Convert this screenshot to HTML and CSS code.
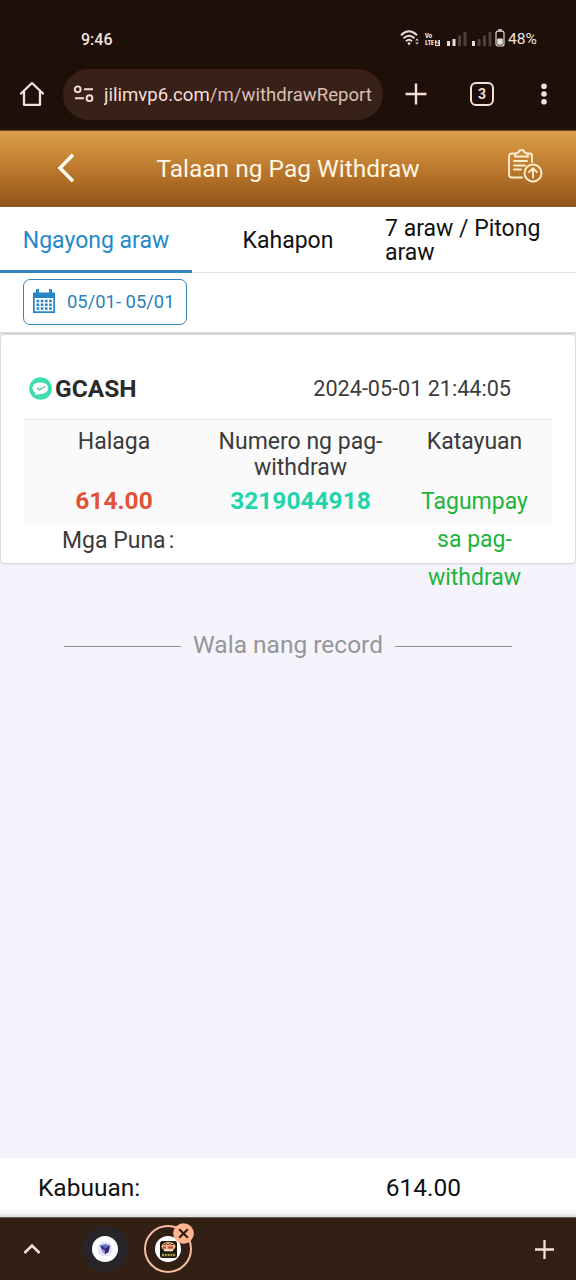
FILE: index.html
```html
<!DOCTYPE html>
<html lang="fil">
<head>
<meta charset="utf-8">
<title>Talaan ng Pag Withdraw</title>
<link rel="stylesheet" href="styles.css">
</head>
<body>
<div class="screen">
  <div class="status-bar">
    <span class="clock">9:46</span>
    <div class="status-icons">
      <svg width="20" height="18" viewBox="0 0 20 18" fill="none" stroke="#e6dcd8" stroke-width="1.9"><path d="M1 6.2Q9 -1.5 17 6.2M3.5 9.3Q9 4 14.5 9.3M6 12.2Q9 9.4 12 12.2"/><circle cx="9" cy="14.6" r="1.3" fill="#e6dcd8" stroke="none"/><path d="M15.2 11.5l1.8-2 1.8 2zM15.2 13.5l1.8 2 1.8-2z" fill="#e6dcd8" stroke="none"/></svg>
      <span class="volte"><span>Vo</span><span class="lte">LTE<b>2</b></span></span>
      <svg class="signal" width="20" height="14" viewBox="0 0 20 14"><path fill="#e6dcd8" d="M0 9h3v5H0zM5.5 7h3v7h-3z"/><path fill="#4d403a" d="M11 3.500h3V14h-3zM16.500 0h3v14h-3z"/></svg>
      <svg class="signal second" width="20" height="14" viewBox="0 0 20 14"><path fill="#e6dcd8" d="M0 9h3v5H0z"/><path fill="#4d403a" d="M5.500 7h3v7h-3zM11 3.500h3V14h-3zM16.500 0h3v14h-3z"/></svg>
      <svg class="battery" width="10" height="18" viewBox="0 0 10 18"><path d="M3 1h4" stroke="#e6dcd8" stroke-width="1.500"/><rect x="1" y="2.200" width="8" height="14.800" rx="2" fill="none" stroke="#e6dcd8" stroke-width="1.200"/><rect x="2.200" y="9.500" width="5.600" height="6.300" rx="1" fill="#e6dcd8"/></svg>
      <span class="percent">48%</span>
    </div>
  </div>

  <div class="toolbar">
    <svg class="home" width="26" height="26" viewBox="0 0 26 26" fill="none" stroke="#f6dfd7" stroke-width="2.300" stroke-linejoin="round" stroke-linecap="round"><path d="M2 12.500L13 2l11 10.500M5 10v13.800h16V10"/></svg>
    <div class="address">
      <svg width="22" height="18" viewBox="0 0 22 18" fill="none" stroke="#f6dfd7" stroke-width="1.900"><circle cx="4.700" cy="4.300" r="2.900"/><path d="M11 4.300h9M2 13.200h9"/><circle cx="16.500" cy="13.200" r="2.900"/></svg>
      <span class="url"><span class="host">jilimvp6.com</span>/m/withdrawReport</span>
    </div>
    <svg class="plus" width="22" height="22" viewBox="0 0 22 22" stroke="#f6dfd7" stroke-width="2.400"><path d="M11 .5v21M.5 11h21"/></svg>
    <span class="tab-count">3</span>
    <svg class="dots" width="8" height="22" viewBox="0 0 8 22" fill="#f6dfd7"><circle cx="4" cy="3.200" r="2.800"/><circle cx="4" cy="11" r="2.800"/><circle cx="4" cy="18.800" r="2.800"/></svg>
  </div>

  <header class="header">
    <svg class="back" width="18" height="30" viewBox="0 0 18 30" fill="none" stroke="#fffaf0" stroke-width="3.500"><path d="M16 1.800L3 15l13 13.200"/></svg>
    <h1 class="title">Talaan ng Pag Withdraw</h1>
    <svg class="report" width="36" height="36" viewBox="0 0 36 36" fill="none" stroke="#ffedcb" stroke-width="1.900" stroke-linecap="round" stroke-linejoin="round"><path d="M8 4.500H5Q2 4.500 2 7.500v18Q2 28.500 5 28.500h10M21 4.500h2Q25 4.500 25 7v6"/><path d="M8 7.500Q7.500 4 11.500 3.500 12 1 14.500 1T17.500 3.500Q21.500 4 21 7.500z"/><path d="M7 12h13M7 16.500h11M7 20.500h7"/><circle cx="26" cy="24" r="8.500"/><path d="M26 28.500v-9M22 23.200l4-4 4 4"/></svg>
  </header>

  <nav class="tabs">
    <span class="tab active">Ngayong araw</span>
    <span class="tab">Kahapon</span>
    <span class="tab">7 araw / Pitong araw</span>
  </nav>

  <div class="filter">
    <div class="date-range">
      <svg width="22" height="24" viewBox="0 0 22 24"><path fill="#2585c7" d="M0 3.500h3v-3h3v3h10v-3h3v3h3V24H0z"/><path fill="#fff" d="M1.700 9h18.600v13.300H1.700z"/><path d="M3.500 12h16M3.500 15.800h16M3.500 19.600h16" stroke="#2585c7" stroke-width="2.500" stroke-dasharray="2.700 1.500"/><path d="M4.500 0v5M17.500 0v5" stroke="#2585c7" stroke-width="2.600" stroke-linecap="round"/></svg>
      <span>05/01- 05/01</span>
    </div>
  </div>

  <main class="content">
    <section class="card">
      <div class="card-head">
        <svg width="23" height="23" viewBox="0 0 23 23"><circle cx="11.500" cy="11.500" r="11.300" fill="#3fdcb0"/><path d="M3.500 10.500Q4 5.500 11 5.500q8.500 0 8 6-.5 5-7.500 5.500-4 .5-5.500 1l.5-2Q3.500 14.500 3.500 10.500z" fill="#fff"/><path d="M8 11l2.500 2 6-3.800" fill="none" stroke="#4bbf9e" stroke-width="1.300"/></svg>
        <strong class="method">GCASH</strong>
        <time class="time">2024-05-01 21:44:05</time>
      </div>
      <div class="details">
        <div class="cell"><span class="label">Halaga</span><b class="value amount">614.00</b></div>
        <div class="cell"><span class="label">Numero ng pag-withdraw</span><b class="value number">3219044918</b></div>
        <div class="cell"><span class="label">Katayuan</span><span class="value state">Tagumpay sa pag-withdraw</span></div>
      </div>
      <div class="remarks">Mga Puna<span class="colon">:</span></div>
    </section>
    <div class="end"><span>Wala nang record</span></div>
  </main>

  <footer class="total"><span class="total-label">Kabuuan:</span><span>614.00</span></footer>

  <div class="tab-strip">
    <svg class="up" width="18" height="12" viewBox="0 0 18 12" fill="none" stroke="#f6dfd7" stroke-width="2.600"><path d="M1.500 10L9 2.500l7.500 7.500"/></svg>
    <div class="site"><svg width="26" height="26" viewBox="0 0 26 26"><circle cx="13" cy="13" r="13" fill="#fff"/><circle cx="13" cy="13" r="7.500" fill="#e2e0fa"/><path d="M8 9.500l5-1.500 5 1.500-1.500 6.500-3.500 2-2.500-2z" fill="#6470c8"/><path d="M8 9.500l4.500 2 .5 2.500-2.500-1zM13 12.500l5-3-1.500 6.500-3.500 2z" fill="#30296f"/><path d="M10.500 14l1.500 1v2.500" stroke="#e8a5b4" fill="none"/></svg></div>
    <div class="site selected"><svg width="26" height="26" viewBox="0 0 26 26"><circle cx="13" cy="13" r="13" fill="#fff"/><rect x="5" y="5" width="17" height="17" rx="2.500" fill="#1d180b"/><ellipse cx="13.500" cy="10.500" rx="7" ry="4.500" fill="#edb58c"/><path d="M8 8l2 1 1-2 2 2 2-2 1 2 3-1" stroke="#71351f" fill="none"/><path d="M8 11.500h3M13 11.500h5" stroke="#b84b36" stroke-width="2"/><path d="M9 14.500h9" stroke="#fff1cf" stroke-width="1.500"/><path d="M7 19h14" stroke="#b1a34e" stroke-width="2.500" stroke-dasharray="2 .8"/></svg>
      <svg class="close" width="21" height="21" viewBox="0 0 21 21"><circle cx="10.500" cy="10.500" r="10.300" fill="#ffb58d"/><path d="M6.200 6.200l8.600 8.600M14.800 6.200l-8.600 8.600" stroke="#321a0c" stroke-width="2.200"/></svg>
    </div>
    <svg class="add" width="19" height="19" viewBox="0 0 19 19" stroke="#f6dfd7" stroke-width="2.300"><path d="M9.500 0v19M0 9.500h19"/></svg>
  </div>
</div>
</body>
</html>
```

FILE: styles.css
```css
* { box-sizing: border-box; }
body { margin: 0; font-family: Roboto, sans-serif; color: #111; }
svg { display: block; flex: none; }
.screen { width: 576px; height: 1280px; display: flex; flex-direction: column; overflow: hidden; background: #f5f4fd; }
.screen > * { flex: none; }

.status-bar { height: 60px; padding: 18px 39px 0 81px; display: flex; align-items: center; justify-content: space-between; background: #1e1009; color: #eee3de; font-size: 16px; }
.clock { font-weight: 500; }
.status-icons { display: flex; align-items: center; height: 20px; margin-top: -3px; }
.volte { display: flex; flex-direction: column; width: 17px; margin: 3px 0 0 5px; font-family: "Open Sans", sans-serif; font-stretch: 75%; font-size: 7.500px; line-height: 7.500px; font-weight: 700; letter-spacing: -.3px; white-space: nowrap; }
.lte { display: flex; align-items: center; }
.volte b { width: 5px; height: 6px; margin-left: 1px; line-height: 6px; text-align: center; background: #e6dcd8; color: #1e1009; font-size: 6px; }
.signal { margin: 2px 0 0 5px; }
.signal.second { margin-left: 5px; }
.battery { margin-left: 3px; }
.percent { margin: 3px 0 0 3px; width: 29px; font-size: 15.500px; white-space: nowrap; }

.toolbar { height: 70px; padding: 0 28px 2px 19px; display: flex; align-items: center; background: #1e1009; }
.address { width: 320px; height: 51px; margin-left: 18px; padding: 0 10px; display: flex; align-items: center; gap: 9px; border-radius: 26px; background: #382118; color: #d9bfb4; }
.url { width: 269px; padding-top: 1px; overflow: hidden; white-space: nowrap; font-size: 18.600px; }
.host { color: #f6dfd7; }
.plus { margin-left: 22px; }
.tab-count { width: 24px; height: 24px; margin-left: 43px; display: flex; align-items: center; justify-content: center; border: 2.5px solid #f6dfd7; border-radius: 6px; color: #f6dfd7; font-size: 14px; font-weight: 700; }
.dots { margin-left: auto; }

.header { height: 77px; padding: 0 33px 2px 57px; display: flex; align-items: center; justify-content: space-between; background: linear-gradient(#dc9f49, #b8752b 55%, #935519 97%, #805a29); border-top: 1px solid #6d441e; }
.title { margin: 0 0 0 -6px; color: #fff6e4; font-size: 24.500px; font-weight: 400; }
.report { margin-top: -3px; }

.tabs { height: 66px; display: grid; grid-template-columns: repeat(3, 192px); background: #fff; box-shadow: inset 0 -1px #e4e4e4; font-size: 23px; line-height: 24px; }
.tab { padding-top: 2px; display: flex; align-items: center; justify-content: center; }
.tab:last-child { padding-left: 1px; }
.tab.active { color: #2589c9; box-shadow: inset 0 -3px #3184b8; }

.filter { height: 61px; padding: 6px 23px; background: #fff; border-bottom: 2px solid #dcdcdc; }
.date-range { width: 164px; height: 46px; padding: 0 0 2px 9px; display: flex; align-items: center; gap: 12px; border: 1.5px solid #3685b8; border-radius: 7px; color: #2c80bc; font-size: 18.400px; white-space: nowrap; }

.content { height: 824px; padding: 1px 1px 0; }
.card { height: 228px; padding: 0 23px; background: #fff; border-radius: 3px; box-shadow: 0 0 3px #aaa; }
.card-head { height: 85px; padding: 23px 0 0 5px; display: flex; align-items: center; border-bottom: 1.5px solid #e1e1e1; }
.method { margin: -1px 0 0 3px; color: #2b2b2b; font-size: 24.500px; }
.time { margin-left: auto; padding-right: 41px; color: #3b3b3b; font-size: 21.600px; }
.details { height: 105px; padding-top: 9px; display: grid; grid-template-columns: 180px 193px 155px; background: #fafafa; text-align: center; color: #3b3b3b; font-size: 23px; }
.cell { display: flex; flex-direction: column; align-items: center; min-height: 0; }
.label { width: 172px; height: 54px; flex: none; line-height: 26px; }
.value { line-height: 38px; }
.amount { margin-top: -1px; color: #e05337; font-size: 24.500px; }
.number { margin-top: -1px; color: #1fd5ab; font-size: 24.500px; }
.state { width: 120px; position: relative; color: #20b43b; }
.remarks { padding: 2px 0 0 38px; color: #3b3b3b; font-size: 23px; line-height: 28px; }
.colon { margin-left: 3px; }
.end { margin: 67px 63px 0; display: flex; align-items: center; gap: 12px; color: #969696; font-size: 24.500px; line-height: 30px; }
.end::before, .end::after { content: ""; flex: 1; height: 1px; margin-top: 3px; background: #929292; }

.total { height: 59px; padding: 0 115px 0 38px; display: flex; align-items: center; justify-content: space-between; background: linear-gradient(#fff 85%, #f6f6f6 93%, #ddd); font-size: 24.500px; }

.tab-strip { height: 63px; padding: 0 22px 0 23px; display: flex; align-items: center; background: #332015; border-top: 1px solid #655850; }
.site { width: 46px; height: 46px; margin-left: 41px; display: flex; align-items: center; justify-content: center; border-radius: 50%; background: #27252a; }
.site.selected { position: relative; width: 48px; height: 48px; margin-left: 16px; background: none; border: 2.5px solid #f8bca0; }
.close { position: absolute; top: -4px; right: -4px; }
.add { margin-left: auto; }
```
